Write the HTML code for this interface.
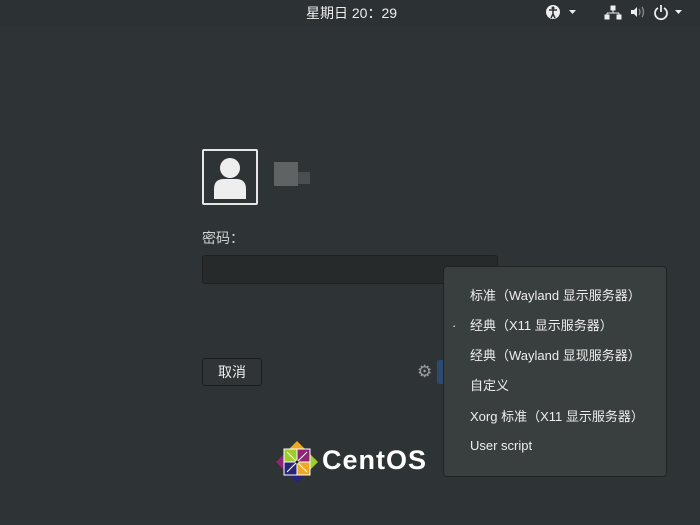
<!DOCTYPE html>
<html><head><meta charset="utf-8"><style>
body{margin:0;width:700px;height:525px;background:#2e3335;font-family:"Liberation Sans","Noto Sans CJK SC",sans-serif;position:relative;overflow:hidden;color:#eeeeec}
.a{position:absolute}
.m div{line-height:16px;white-space:nowrap}
</style></head><body>
<div class="a" style="left:0;top:0;width:700px;height:26px;background:#2c3133"></div>
<div class="a" style="left:306px;top:4px;font-size:14px;line-height:18px;color:#eeeeec">星期日 20：29</div>
<svg class="a" style="left:545px;top:3px" width="36" height="18"><circle cx="8" cy="9" r="7" fill="#eee"/><circle cx="8" cy="5" r="1.5" fill="#2c3133"/><path d="M4 7h8M8 7v4l-2 4M8 11l2 4" stroke="#2c3133" stroke-width="1.5" fill="none"/><path d="M24 7h7l-3.5 4z" fill="#eee"/></svg>
<svg class="a" style="left:603px;top:3px" width="95" height="18"><path d="M8 3h4v4H8zM10 7v3M4 10h12M4 10v2M16 10v2M2 12h4v4H2zM14 12h4v4h-4z" fill="#eee" stroke="#eee" stroke-width="1"/><path d="M28 7h3l3-3v10l-3-3h-3z" fill="#eee"/><path d="M36 6q2 3 0 6M39 4q3 5 0 10" stroke="#888" fill="none" stroke-width="1.4"/><path d="M55 5a6 6 0 1 0 6 0M58 2v7" stroke="#eee" stroke-width="1.8" fill="none"/><path d="M72 7h7l-3.5 4z" fill="#eee"/></svg>
<div class="a" style="left:202px;top:149px;width:52px;height:52px;border:2px solid #e6e6e6;border-radius:2px;background:#2e3335"></div>
<svg class="a" style="left:204px;top:151px" width="52" height="52"><circle cx="26" cy="17" r="10" fill="#eee"/><path d="M10 48v-10q0-10 10-10h12q10 0 10 10v10z" fill="#eee"/></svg>
<div class="a" style="left:274px;top:162px;width:24px;height:24px;background:#6b6f70;opacity:.8"></div>
<div class="a" style="left:298px;top:172px;width:12px;height:12px;background:#4a4e50"></div>
<div class="a" style="left:202px;top:229px;font-size:14px;line-height:18px;color:#d0d2d2">密码：</div>
<div class="a" style="left:202px;top:255px;width:294px;height:27px;background:#272a2b;border:1px solid #1f2223;border-radius:3px"></div>
<div class="a" style="left:202px;top:358px;width:58px;height:26px;background:#2f3436;border:1px solid #1c1f20;border-radius:3px;font-size:14px;text-align:center;line-height:26px">取消</div>
<div class="a" style="left:417px;top:362px;font-size:17px;color:#9a9c9c">⚙</div>
<div class="a" style="left:437px;top:360px;width:8px;height:24px;background:#2a4a70;border-radius:2px"></div>
<div class="a m" style="left:443px;top:266px;width:222px;height:209px;background:#393f3f;border:1px solid #1f2324;border-radius:4px;font-size:13px;color:#eeeeec">
<div class="a" style="left:26px;top:21px">标准（Wayland 显示服务器）</div>
<div class="a" style="left:8px;top:51px">·</div>
<div class="a" style="left:26px;top:51px">经典（X11 显示服务器）</div>
<div class="a" style="left:26px;top:81px">经典（Wayland 显现服务器）</div>
<div class="a" style="left:26px;top:111px">自定义</div>
<div class="a" style="left:26px;top:142px">Xorg 标准（X11 显示服务器）</div>
<div class="a" style="left:26px;top:171px">User script</div>
</div>
<svg class="a" style="left:275px;top:440px" width="44" height="44" viewBox="0 0 44 44"><path d="M22 1L30 9H14z" fill="#efa724"/><path d="M43 22L35 30V14z" fill="#9ccd2a"/><path d="M22 43L14 35H30z" fill="#262577"/><path d="M1 22L9 14V30z" fill="#932279"/><rect x="9" y="9" width="13" height="13" fill="#9ccd2a" stroke="#fff"/><rect x="22" y="9" width="13" height="13" fill="#932279" stroke="#fff"/><rect x="9" y="22" width="13" height="13" fill="#262577" stroke="#fff"/><rect x="22" y="22" width="13" height="13" fill="#efa724" stroke="#fff"/><path d="M12 12L32 32M32 12L12 32" stroke="#fff" stroke-width="1"/><circle cx="22" cy="22" r="1.5" fill="#222"/></svg>
<div class="a" style="left:322px;top:444px;font-size:27px;line-height:32px;font-weight:bold;color:#fff;letter-spacing:1px">CentOS</div>
</body></html>
